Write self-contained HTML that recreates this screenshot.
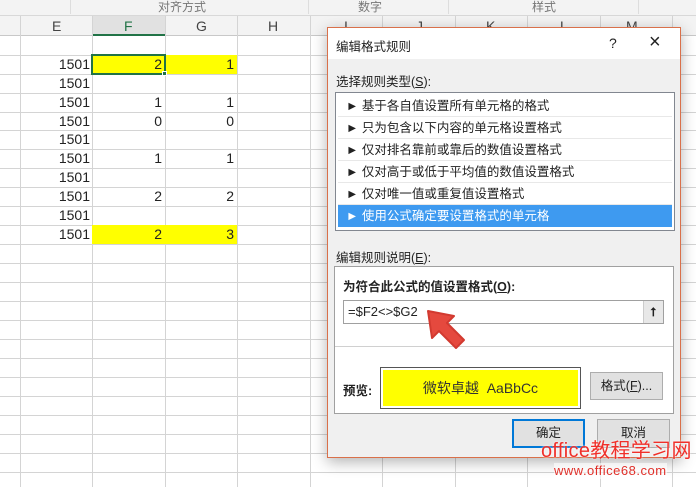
<!DOCTYPE html>
<html><head><meta charset="utf-8"><style>
*{margin:0;padding:0;box-sizing:border-box}
body{width:696px;height:487px;overflow:hidden;background:#fff;position:relative;font-family:"Liberation Sans","Noto Sans CJK SC",sans-serif;font-size:13px;color:#222}
.a{position:absolute}
.vl{position:absolute;top:16px;bottom:0;width:1px;background:#d4d4d4}
.hl{position:absolute;left:0;right:0;height:1px;background:#d4d4d4}
.n{position:absolute;text-align:right;font-size:14px;color:#222;line-height:19px}
.li{position:absolute;left:2px;right:2px;height:22px;line-height:22px;padding-left:8px;font-size:12.5px;border-bottom:1px solid #e8e8e8}
.btn{position:absolute;background:#e1e1e1;border:1px solid #adadad;text-align:center;font-size:12.5px}
.ch{position:absolute;top:18px;font-size:14px;color:#444}
</style></head><body>
<div class="a" style="left:0;top:0;width:696px;height:16px;background:#f3f3f3;border-bottom:1px solid #d8d8d8"></div>
<div class="a" style="left:158px;top:0;font-size:12px;color:#777;line-height:14px">对齐方式</div>
<div class="a" style="left:358px;top:0;font-size:12px;color:#777;line-height:14px">数字</div>
<div class="a" style="left:532px;top:0;font-size:12px;color:#777;line-height:14px">样式</div>
<div class="a" style="left:70px;top:0;width:1px;height:14px;background:#ddd"></div>
<div class="a" style="left:308px;top:0;width:1px;height:14px;background:#ddd"></div>
<div class="a" style="left:448px;top:0;width:1px;height:14px;background:#ddd"></div>
<div class="a" style="left:638px;top:0;width:1px;height:14px;background:#ddd"></div>
<div class="a" style="left:0;top:16px;width:696px;height:20px;background:#f3f3f3;border-bottom:1px solid #c8c8c8"></div>
<div class="a" style="left:92px;top:16px;width:73px;height:20px;background:#e1e1e1;border-bottom:2px solid #217346"></div>
<div class="ch" style="left:52px">E</div>
<div class="ch" style="left:124px;color:#217346">F</div>
<div class="ch" style="left:196px">G</div>
<div class="ch" style="left:268px">H</div>
<div class="ch" style="left:344px">I</div>
<div class="ch" style="left:416px">J</div>
<div class="ch" style="left:486px">K</div>
<div class="ch" style="left:560px">L</div>
<div class="ch" style="left:626px">M</div>
<div class="vl" style="left:20px"></div><div class="vl" style="left:92px"></div><div class="vl" style="left:165px"></div><div class="vl" style="left:237px"></div><div class="vl" style="left:310px"></div><div class="vl" style="left:382px"></div><div class="vl" style="left:455px"></div><div class="vl" style="left:527px"></div><div class="vl" style="left:600px"></div><div class="vl" style="left:672px"></div>
<div class="hl" style="top:55px"></div><div class="hl" style="top:74px"></div><div class="hl" style="top:93px"></div><div class="hl" style="top:112px"></div><div class="hl" style="top:130px"></div><div class="hl" style="top:149px"></div><div class="hl" style="top:168px"></div><div class="hl" style="top:187px"></div><div class="hl" style="top:206px"></div><div class="hl" style="top:225px"></div><div class="hl" style="top:244px"></div><div class="hl" style="top:263px"></div><div class="hl" style="top:282px"></div><div class="hl" style="top:301px"></div><div class="hl" style="top:320px"></div><div class="hl" style="top:339px"></div><div class="hl" style="top:358px"></div><div class="hl" style="top:377px"></div><div class="hl" style="top:396px"></div><div class="hl" style="top:415px"></div><div class="hl" style="top:434px"></div><div class="hl" style="top:453px"></div><div class="hl" style="top:472px"></div>
<div class="a" style="left:92px;top:55px;width:145px;height:19px;background:#ffff00"></div>
<div class="a" style="left:92px;top:225px;width:145px;height:19px;background:#ffff00"></div>
<div class="a" style="left:91px;top:54px;width:75px;height:21px;border:2px solid #217346"></div>
<div class="a" style="left:162px;top:71px;width:5px;height:5px;background:#217346;border:1px solid #fff"></div>
<div class="n" style="left:20px;width:70px;top:55px">1501</div><div class="n" style="left:92px;width:70px;top:55px">2</div><div class="n" style="left:165px;width:69px;top:55px">1</div>
<div class="n" style="left:20px;width:70px;top:74px">1501</div>
<div class="n" style="left:20px;width:70px;top:93px">1501</div><div class="n" style="left:92px;width:70px;top:93px">1</div><div class="n" style="left:165px;width:69px;top:93px">1</div>
<div class="n" style="left:20px;width:70px;top:112px">1501</div><div class="n" style="left:92px;width:70px;top:112px">0</div><div class="n" style="left:165px;width:69px;top:112px">0</div>
<div class="n" style="left:20px;width:70px;top:130px">1501</div>
<div class="n" style="left:20px;width:70px;top:149px">1501</div><div class="n" style="left:92px;width:70px;top:149px">1</div><div class="n" style="left:165px;width:69px;top:149px">1</div>
<div class="n" style="left:20px;width:70px;top:168px">1501</div>
<div class="n" style="left:20px;width:70px;top:187px">1501</div><div class="n" style="left:92px;width:70px;top:187px">2</div><div class="n" style="left:165px;width:69px;top:187px">2</div>
<div class="n" style="left:20px;width:70px;top:206px">1501</div>
<div class="n" style="left:20px;width:70px;top:225px">1501</div><div class="n" style="left:92px;width:70px;top:225px">2</div><div class="n" style="left:165px;width:69px;top:225px">3</div>

<div class="a" style="left:327px;top:27px;width:354px;height:431px;background:#f0f0f0;border:1px solid #d9704a;box-shadow:0 4px 14px rgba(0,0,0,.3)">
 <div class="a" style="left:0;top:0;width:352px;height:31px;background:#fff"></div>
 <div class="a" style="left:8px;top:8px;font-size:12.5px">编辑格式规则</div>
 <div class="a" style="left:281px;top:7px;font-size:14px">?</div>
 <div class="a" style="left:321px;top:3px;font-size:20px;font-weight:300">×</div>
 <div class="a" style="left:8px;top:43px;font-size:12.5px">选择规则类型(<u>S</u>):</div>
 <div class="a" style="left:7px;top:64px;width:340px;height:139px;background:#fff;border:1px solid #828790">
  <div class="li" style="top:2px">► 基于各自值设置所有单元格的格式</div>
  <div class="li" style="top:24px">► 只为包含以下内容的单元格设置格式</div>
  <div class="li" style="top:46px">► 仅对排名靠前或靠后的数值设置格式</div>
  <div class="li" style="top:68px">► 仅对高于或低于平均值的数值设置格式</div>
  <div class="li" style="top:90px">► 仅对唯一值或重复值设置格式</div>
  <div class="li" style="top:112px;background:#3e9af0;color:#fff;border:none">► 使用公式确定要设置格式的单元格</div>
 </div>
 <div class="a" style="left:8px;top:219px;font-size:12.5px">编辑规则说明(<u>E</u>):</div>
 <div class="a" style="left:6px;top:238px;width:340px;height:148px;background:#fff;border:1px solid #a0a0a0">
  <div class="a" style="left:8px;top:9px;font-size:12.5px;font-weight:bold">为符合此公式的值设置格式(<u>O</u>):</div>
  <div class="a" style="left:8px;top:33px;width:321px;height:24px;border:1px solid #a0a0a0;background:#fff;font-size:13px;line-height:22px;padding-left:4px">=$F2&lt;&gt;$G2</div>
  <div class="a" style="left:308px;top:34px;width:20px;height:22px;background:#e8e8e8;border-left:1px solid #ccc;text-align:center;font-size:12px;line-height:22px;font-weight:bold">⭡</div>
  <div class="a" style="left:0;top:79px;width:338px;height:1px;background:#d0d0d0"></div>
  <div class="a" style="left:8px;top:113px;font-size:12.5px;font-weight:bold">预览:</div>
  <div class="a" style="left:45px;top:100px;width:201px;height:42px;border:1px solid #555;background:#fff;padding:2px">
   <div style="background:#ffff00;height:36px;line-height:36px;text-align:center;font-size:14px;color:#333">微软卓越&nbsp; AaBbCc</div>
  </div>
  <div class="btn" style="left:255px;top:105px;width:73px;height:28px;line-height:26px">格式(<u>F</u>)...</div>
 </div>
 <div class="btn" style="left:184px;top:391px;width:73px;height:29px;line-height:25px;border:2px solid #0078d7">确定</div>
 <div class="btn" style="left:269px;top:391px;width:73px;height:29px;line-height:27px">取消</div>
</div>
<svg class="a" style="left:422px;top:305px" width="50" height="50" viewBox="0 0 50 50"><path d="M6 6 L32 11 L25 18 L42 35 L34 43 L17 26 L10 33 Z" fill="#e5493e" stroke="#d23a30" stroke-linejoin="round" stroke-width="2"/></svg>
<div class="a" style="left:541px;top:440px;font-size:20px;color:#f0302a;line-height:22px;letter-spacing:0.3px;text-shadow:0 0 2px #fff">office教程学习网</div>
<div class="a" style="left:554px;top:463px;font-size:13px;color:#e0302a;line-height:16px;letter-spacing:0.5px;background:rgba(255,255,255,.6)">www.office68.com</div>
</body></html>
